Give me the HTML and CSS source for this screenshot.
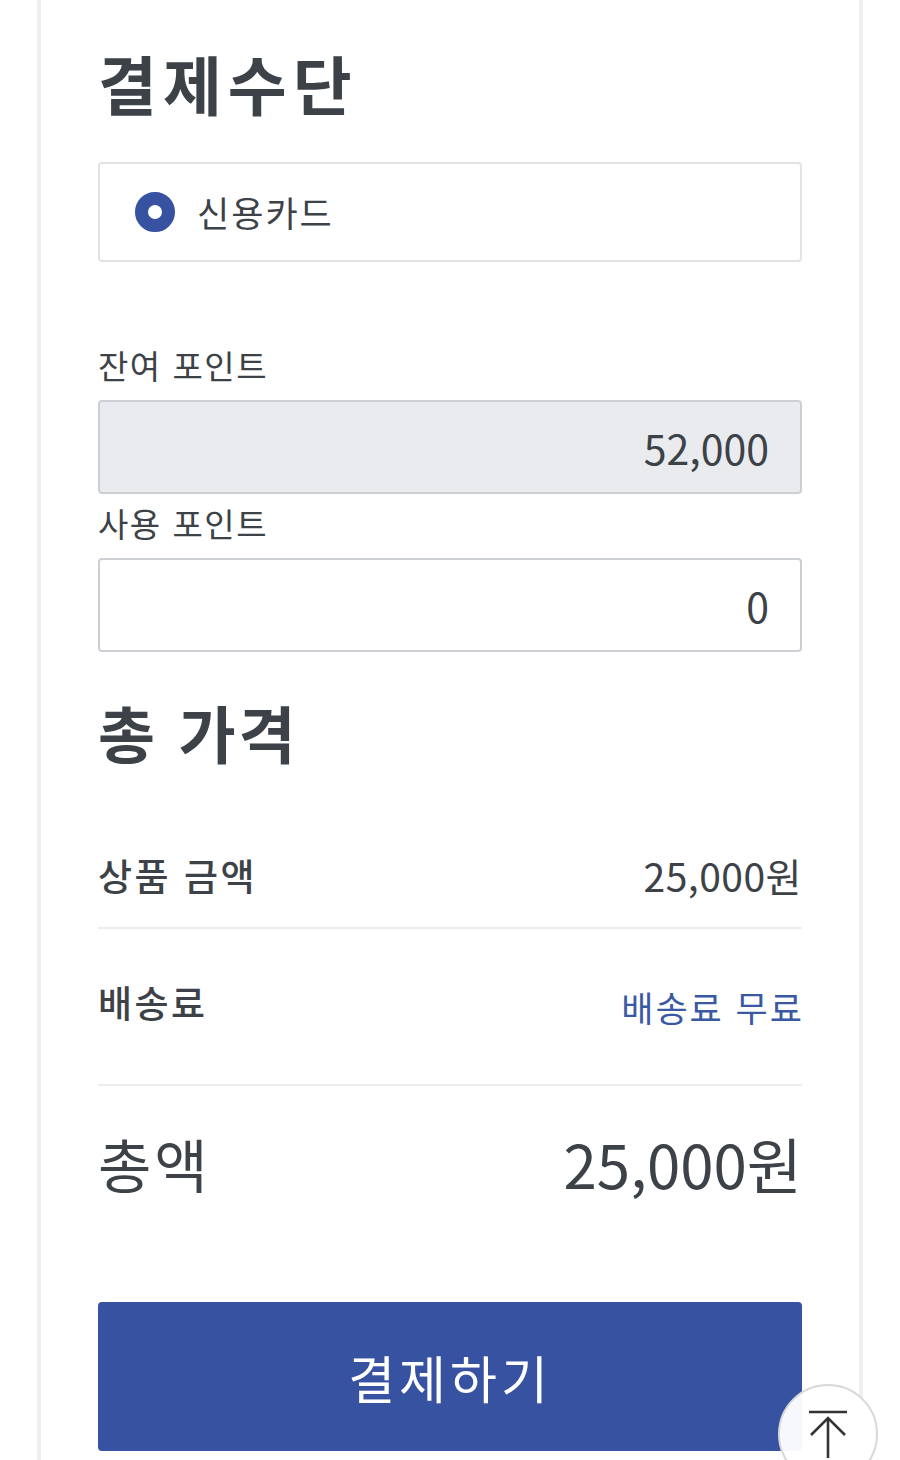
FILE: index.html
```html
<!DOCTYPE html>
<html lang="ko">
<head>
  <meta charset="utf-8">
  <title>결제</title>
  <link rel="stylesheet" href="styles.css">
</head>
<body>
  <div class="card">
    <h1 class="section-title">결제수단</h1>

    <!-- 결제수단 선택 -->
    <label class="pay-option">
      <span class="radio"></span>
      <span class="pay-name">신용카드</span>
    </label>

    <!-- 포인트 -->
    <div class="point-group">
      <div class="field-label">잔여 포인트</div>
      <input class="field-input field-disabled" type="text" value="52,000" readonly>
      <div class="field-label">사용 포인트</div>
      <input class="field-input" type="text" value="0">
    </div>

    <h2 class="section-title total-title">총 가격</h2>

    <!-- 가격 요약 -->
    <div class="summary">
      <div class="summary-row first">
        <span class="row-name">상품 금액</span>
        <span class="row-value">25,000원</span>
      </div>
      <div class="summary-row second">
        <span class="row-name">배송료</span>
        <span class="row-value free">배송료 무료</span>
      </div>
      <div class="summary-row total">
        <span class="total-name">총액</span>
        <span class="total-value">25,000원</span>
      </div>
    </div>

    <button class="pay-button">결제하기</button>
  </div>

  <!-- 맨 위로 버튼 -->
  <button class="top-button" aria-label="맨 위로">
    <svg width="44" height="52" viewBox="0 0 44 52" fill="none" stroke="#333" stroke-width="2.6">
      <line x1="3" y1="4" x2="41" y2="4"/>
      <line x1="22" y1="10" x2="22" y2="50"/>
      <polyline points="5,27 22,10 39,27"/>
    </svg>
  </button>
</body>
</html>
```

FILE: styles.css
```css
/* 기본 */
body {
  margin: 0;
  background-color: #fff;
  font-family: "Noto Sans CJK KR", "Noto Sans", sans-serif;
  color: #3c4247;
}

.card {
  margin: 0 37px;
  padding: 42px 57px 40px;
  border-left: 4px solid #efefef;
  border-right: 4px solid #efefef;
  min-height: 1460px;
  box-sizing: border-box;
}

.section-title {
  margin: 0;
  font-size: 64px;
  line-height: 80px;
  font-weight: 700;
  letter-spacing: 6px;
}

/* 결제수단 */
.pay-option {
  display: flex;
  align-items: center;
  height: 100px;
  margin-top: 40px;
  padding-left: 35px;
  border: 2px solid #e3e3e3;
  border-radius: 4px;
  box-sizing: border-box;
}

.radio {
  width: 14px;
  height: 14px;
  border: 13px solid #3652a0;
  border-radius: 50%;
  background-color: #fff;
}

.pay-name {
  margin-left: 22px;
  font-size: 35px;
  line-height: 44px;
  letter-spacing: 2px;
}

/* 포인트 */
.point-group {
  margin-top: 83px;
}

.field-label {
  font-size: 33px;
  line-height: 40px;
  margin-bottom: 15px;
  letter-spacing: 1.5px;
}

.field-input {
  display: block;
  width: 100%;
  height: 94px;
  margin: 0 0 9px;
  padding: 0 31px 0 20px;
  border: 2px solid #ccd0d4;
  border-radius: 4px;
  box-sizing: border-box;
  background-color: #fff;
  font-family: "Noto Sans CJK KR", "Noto Sans", sans-serif;
  font-size: 41px;
  color: #3c4247;
  text-align: right;
  outline: none;
}

.field-disabled {
  background-color: #e9ebef;
}

.total-title {
  margin-top: 42px;
  font-size: 62px;
  line-height: 76px;
  letter-spacing: 3px;
}

/* 가격 요약 */
.summary-row {
  display: flex;
  justify-content: space-between;
  align-items: center;
  border-bottom: 2px solid #ececec;
  line-height: 48px;
}

.summary-row.first {
  padding: 81px 0 28px;
}

.summary-row.second {
  align-items: flex-start;
  padding: 49px 0 53px;
}

.row-name {
  font-size: 37px;
  font-weight: 500;
  letter-spacing: 2.5px;
}

.row-value {
  font-size: 39px;
  letter-spacing: 0.5px;
}

.row-value.free {
  font-size: 35px;
  color: #3a59a3;
  margin: 5px -2px 0 0;
  letter-spacing: 2px;
}

.summary-row.total {
  padding: 42px 0 0;
  border-bottom: none;
  line-height: 70px;
}

.total-name {
  font-size: 58px;
  letter-spacing: 3px;
}

.total-value {
  font-size: 60px;
}

/* 결제 버튼 */
.pay-button {
  display: block;
  width: 100%;
  height: 149px;
  margin-top: 104px;
  border: none;
  border-radius: 4px;
  background-color: #3652a0;
  color: #fff;
  font-family: "Noto Sans CJK KR", "Noto Sans", sans-serif;
  font-size: 51px;
  letter-spacing: 4px;
  cursor: pointer;
}

/* 맨 위로 버튼 */
.top-button {
  position: fixed;
  right: 22px;
  bottom: -24px;
  width: 100px;
  height: 100px;
  display: flex;
  justify-content: center;
  align-items: flex-start;
  padding: 22px 0 0;
  border: 2px solid #d8d8d8;
  border-radius: 50%;
  background-color: rgba(255, 255, 255, 0.96);
  box-sizing: border-box;
  cursor: pointer;
}
```
